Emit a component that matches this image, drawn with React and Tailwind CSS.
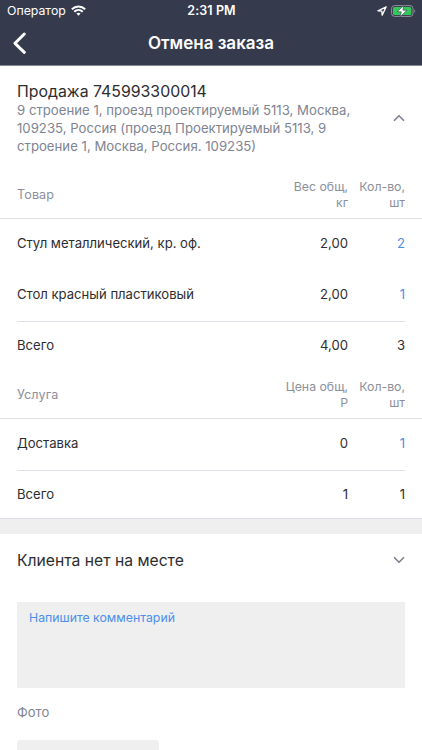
import { ChevronDown, ChevronUp } from 'lucide-react'

const goods = [
  { name: 'Стул металлический, кр. оф.', value: '2,00', count: '2' },
  { name: 'Стол красный пластиковый', value: '2,00', count: '1' },
]

const services = [{ name: 'Доставка', value: '0', count: '1' }]

function StatusBar() {
  return (
    <div className="grid h-[22px] grid-cols-3 items-center pl-[7px] pr-[6px] text-[12.5px] leading-[22px]">
      <div className="flex items-center gap-[5px]">
        <span className="text-[12.3px]">Оператор</span>
        <svg className="mb-px h-[11px] w-[15px]" viewBox="0 0 16 11" fill="none" stroke="currentColor" strokeWidth="2.1">
          <path d="M0.9 4.2C5 0.2 11 0.2 15.1 4.2" />
          <path d="M3.5 6.8C6.1 4.4 9.9 4.4 12.5 6.8" />
          <path d="M5.8 8.7C7.1 7.7 8.9 7.7 10.2 8.7L8 11Z" fill="currentColor" stroke="none" />
        </svg>
      </div>
      <div className="text-center font-semibold tracking-[0.1px]">2:31 PM</div>
      <div className="flex items-center justify-end gap-[4px]">
        <svg className="h-[10px] w-[10px]" viewBox="0 0 10 10" fill="none" stroke="currentColor" strokeWidth="1.3" strokeLinejoin="round">
          <path d="M9.2 0.8L0.9 4.8L4.8 5.2L5.2 9.1Z" />
        </svg>
        <svg className="h-[12px] w-[25px]" viewBox="0 0 25 12">
          <rect x="0.6" y="0.6" width="21.4" height="10.8" rx="3" fill="none" stroke="#8e929c" />
          <rect x="2" y="2" width="18.4" height="8" rx="1.6" fill="#35c759" />
          <path d="M23.4 4.2C24.5 4.7 24.5 7.3 23.4 7.8Z" fill="#8e929c" />
          <path d="M12.8 0.4L6.2 6.8H10.3L9.1 11.7L16 5.2H11.9Z" fill="#fff" stroke="#353b4d" strokeWidth="0.6" />
        </svg>
      </div>
    </div>
  )
}

function Table({ title, valueLabel, unit, rows, total }) {
  return (
    <div>
      <div className="flex h-[50px] items-center border-b border-[#dddfe9] px-[17px] pt-[3px] text-[12.3px] leading-[16px] text-[#8c909b]">
        <span className="flex-1 text-[12.6px] tracking-[0.1px]">{title}</span>
        <span className="w-[75px] text-right">
          {valueLabel}
          <br />
          {unit}
        </span>
        <span className="w-[57px] text-right">
          Кол-во,
          <br />
          шт
        </span>
      </div>
      <div className="px-[17px] text-[13.1px] text-[#2d2d2f]">
        {rows.map((row) => (
          <div key={row.name} className="flex h-[51px] items-center pb-px">
            <span className="flex-1">{row.name}</span>
            <span className="w-[75px] text-right">{row.value}</span>
            <span className="w-[57px] text-right text-[#4c8eeb]">{row.count}</span>
          </div>
        ))}
        <div className="flex h-[48px] items-center border-t border-[#dddfe9]">
          <span className="flex-1">Всего</span>
          <span className="w-[75px] text-right">{total.value}</span>
          <span className="w-[57px] text-right">{total.count}</span>
        </div>
      </div>
    </div>
  )
}

export default function App() {
  return (
    <div className="flex h-[750px] w-[422px] flex-col overflow-hidden bg-white font-['Inter',sans-serif]">
      <header className="h-[66px] shrink-0 border-b border-[#858995] bg-[#353b4d] text-white">
        <StatusBar />
        <div className="grid h-[43px] grid-cols-[60px_1fr_60px] items-center">
          <svg className="ml-[12px] h-[24px] w-[16px]" viewBox="0 0 16 24" fill="none" stroke="currentColor" strokeWidth="3" strokeLinecap="round" strokeLinejoin="round">
            <path d="M12.3 2L3 11.3L12.3 20.3" />
          </svg>
          <h1 className="text-center text-[17px] font-semibold">Отмена заказа</h1>
        </div>
      </header>

      {/* Order */}
      <section className="flex h-[103px] shrink-0 items-center justify-between pl-[17px] pr-[14px]">
        <div className="w-[345px] pt-[3px]">
          <h2 className="text-[15.85px] leading-[18px] text-[#2d2d2f]">Продажа 745993300014</h2>
          <p className="text-[13.2px] leading-[18.3px] text-[#7e8491]">
            9 строение 1, проезд проектируемый 5113, Москва,
            <br />
            109235, Россия (проезд Проектируемый 5113, 9
            <br />
            строение 1, Москва, Россия. 109235)
          </p>
        </div>
        <ChevronUp className="h-[18px] w-[18px] shrink-0 text-[#7e8491]" strokeWidth={2.3} />
      </section>

      <div className="shrink-0 border-b border-[#dddfe9]">
        <Table title="Товар" valueLabel="Вес общ," unit="кг" rows={goods} total={{ value: '4,00', count: '3' }} />
        <Table title="Услуга" valueLabel="Цена общ," unit="Р" rows={services} total={{ value: '1', count: '1' }} />
      </div>
      <div className="h-[15px] shrink-0 bg-[#efeff0]" />

      {/* Cancellation reason */}
      <section className="shrink-0 px-[17px]">
        <div className="flex h-[52px] items-center justify-between text-[15.7px] text-[#2d2d2f]">
          <span className="pt-[2px]">Клиента нет на месте</span>
          <ChevronDown className="-mr-[3px] h-[18px] w-[18px] text-[#7e8491]" strokeWidth={2.3} />
        </div>
        <div className="mt-[16px] h-[86px] bg-[#efefef] px-[12px] py-[7px] text-[12.3px] leading-[18px] text-[#4c8eeb]">
          Напишите комментарий
        </div>
        <div className="mt-[14px] text-[13px] leading-[20px] text-[#7e8491]">Фото</div>
        <div className="mt-[18px] h-[50px] w-[142px] rounded-[3px] bg-[#efefef]" />
      </section>
    </div>
  )
}
